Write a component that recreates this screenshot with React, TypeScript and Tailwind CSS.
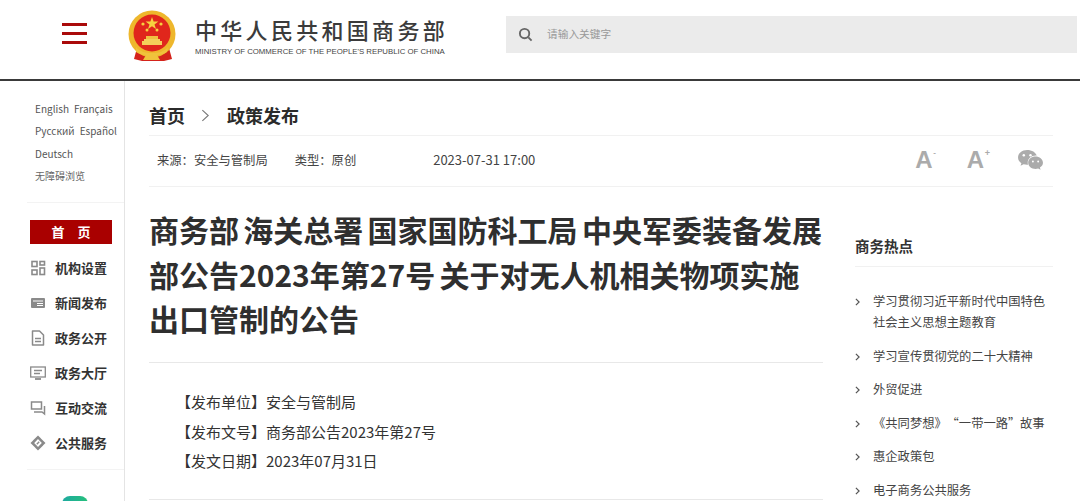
import React from 'react';

const FONT = "font-['Noto_Sans_CJK_SC','Noto_Sans',sans-serif]";

const Emblem: React.FC = () => (
  <svg width="50" height="52" viewBox="0 0 50 52" className="shrink-0">
    <path d="M9 38l-3 11 8 2h22l8-2-3-11z" fill="#d4231b" />
    <circle cx="24" cy="24" r="23.5" fill="#eeb72c" />
    <circle cx="24" cy="23" r="18.5" fill="#e0261c" />
    <polygon points="24,7 25.6,11.6 30.4,11.6 26.5,14.4 28,19 24,16.2 20,19 21.5,14.4 17.6,11.6 22.4,11.6" fill="#f6d13f" />
    <circle cx="15" cy="14" r="1.6" fill="#f6d13f" />
    <circle cx="33" cy="14" r="1.6" fill="#f6d13f" />
    <circle cx="19" cy="20" r="1.5" fill="#f6d13f" />
    <circle cx="29" cy="20" r="1.5" fill="#f6d13f" />
    <path d="M16 29h16v2h2v4H14v-4h2z" fill="#f4cf5a" />
    <path d="M18 26h12v3H18z" fill="#f0c040" />
    <path d="M8 37c4 5 10 6 16 6s12-1 16-6l-1 5c-3 2-6 3-10 3l3 5H15l3-5c-4 0-7-1-10-3z" fill="#f0c23c" />
  </svg>
);

const navIcon = 'w-[16px] h-[16px] shrink-0 text-[#8a8a8a]';
const PINWHEEL = 'M8 0.5L10.8 3.3L9 5.1L8 4.100L4.700 7.400L2.900 5.600z';

const NAV: { label: string; icon: React.ReactNode }[] = [
  {
    label: '机构设置',
    icon: (
      <svg viewBox="0 0 16 16" className={navIcon} fill="none" stroke="currentColor" strokeWidth="1.6">
        <rect x="2" y="1.5" width="5" height="5" />
        <rect x="10" y="1.5" width="4.5" height="3.5" />
        <rect x="2" y="10" width="5" height="4.5" />
        <rect x="10" y="8" width="4.5" height="6.5" />
      </svg>
    ),
  },
  {
    label: '新闻发布',
    icon: (
      <svg viewBox="0 0 16 16" className={navIcon}>
        <rect x="1" y="3" width="14" height="10" rx="1" fill="currentColor" />
        <path d="M3 6h10M7 8.5h6M7 10.5h6" stroke="#fff" strokeWidth="1" />
      </svg>
    ),
  },
  {
    label: '政务公开',
    icon: (
      <svg viewBox="0 0 16 16" className={navIcon} fill="none" stroke="currentColor" strokeWidth="1.5">
        <path d="M2.5 1h7l4 4v10h-11z" strokeLinejoin="round" />
        <path d="M5 8.5h6M5 11.5h6" />
      </svg>
    ),
  },
  {
    label: '政务大厅',
    icon: (
      <svg viewBox="0 0 16 16" className={navIcon} fill="none" stroke="currentColor" strokeWidth="1.3">
        <rect x="0.7" y="2" width="14.6" height="10" />
        <path d="M4 5.5h8M4 8.5h6" />
        <path d="M5 14h6" strokeWidth="1.8" />
      </svg>
    ),
  },
  {
    label: '互动交流',
    icon: (
      <svg viewBox="0 0 16 16" className={navIcon} fill="none" stroke="currentColor" strokeWidth="1.5">
        <path d="M1.5 2h10v7h-10z" />
        <path d="M4 12h8l2.5 2V6" />
      </svg>
    ),
  },
  {
    label: '公共服务',
    icon: (
      <svg viewBox="0 0 16 16" className={navIcon} fill="currentColor">
        <path d={PINWHEEL} />
        <path d={PINWHEEL} transform="rotate(90 8 8)" />
        <path d={PINWHEEL} transform="rotate(180 8 8)" />
        <path d={PINWHEEL} transform="rotate(270 8 8)" />
        <path d="M6.300 8.700L8.700 6.300L9.700 7.300L7.300 9.700z" />
      </svg>
    ),
  },
];

const HOT: string[][] = [
  ['学习贯彻习近平新时代中国特色', '社会主义思想主题教育'],
  ['学习宣传贯彻党的二十大精神'],
  ['外贸促进'],
  ['《共同梦想》 “一带一路” 故事'],
  ['惠企政策包'],
  ['电子商务公共服务'],
];

const App: React.FC = () => {
  return (
    <div className={`${FONT} w-[1080px] h-[501px] overflow-hidden bg-white`}>
      {/* Header */}
      <header className="h-[81px] border-b-2 border-[#3a3a3a] flex">
        <div className="w-[128px] shrink-0 flex items-center pl-[62px] pb-[12px]">
          <div className="w-[25px] flex flex-col gap-[6px]">
            <div className="h-[3px] bg-[#aa0a0a]" />
            <div className="h-[3px] bg-[#aa0a0a]" />
            <div className="h-[3px] bg-[#aa0a0a]" />
          </div>
        </div>
        <div className="w-[378px] shrink-0 flex items-start pt-[10px]">
          <Emblem />
          <div className="ml-[17px] pt-[5px]">
            <div className="text-[22px] leading-[28px] tracking-[3.3px] font-medium text-[#3b3b3b] whitespace-nowrap">中华人民共和国商务部</div>
            <div className="font-['Liberation_Sans',sans-serif] text-[7.8px] leading-[12px] mt-[3px] text-[#444] whitespace-nowrap">MINISTRY OF COMMERCE OF THE PEOPLE'S REPUBLIC OF CHINA</div>
          </div>
        </div>
        <div className="w-[571px] h-[37px] mt-[16px] bg-[#ebebeb] flex items-center pl-[12px]">
          <svg viewBox="0 0 16 16" className="w-[15px] h-[15px] text-[#666]" fill="none" stroke="currentColor" strokeWidth="2">
            <circle cx="7" cy="7" r="5" />
            <path d="M11 11l3.5 3.5" />
          </svg>
          <span className="ml-[14px] text-[10.7px] text-[#999]">请输入关键字</span>
        </div>
      </header>

      <div className="flex h-[420px]">
        {/* Left sidebar */}
        <aside className="w-[125px] shrink-0 border-r border-[#e4e4e4] pl-[27px]">
          <div className="h-[122px] border-b border-[#f3f3f3] pl-[8px] pt-[17px] text-[10px] leading-[22.4px] text-[#555] whitespace-nowrap">
            <div className="flex gap-[5px]"><span>English</span><span>Français</span></div>
            <div className="flex gap-[5px]"><span>Русский</span><span>Español</span></div>
            <div>Deutsch</div>
            <div className="text-[#666]">无障碍浏览</div>
          </div>
          <div className="h-[267px] border-b border-[#f3f3f3] pl-[3px] pt-[17px]">
            <div className="w-[82px] h-[24px] bg-[#a90000] text-white text-[13px] font-bold flex items-center justify-center gap-[13px]">
              <span>首</span><span>页</span>
            </div>
            <ul className="mt-[6px]">
              {NAV.map((n) => (
                <li key={n.label} className="h-[35px] flex items-center">
                  {n.icon}
                  <span className="ml-[9px] text-[13px] font-bold text-[#333] whitespace-nowrap">{n.label}</span>
                </li>
              ))}
            </ul>
          </div>
          <div className="w-[26px] h-[10px] ml-[35px] mt-[26px] rounded-t-[8px] bg-gradient-to-r from-[#1fa9a0] to-[#27c07a]" />
        </aside>

        {/* Main */}
        <main className="w-[928px] shrink-0 pl-[24px]">
          <div className="h-[55px] border-b border-[#f1f1f1] flex items-center pt-[15px] text-[18px] font-bold text-[#2b2b2b]">
            <span>首页</span>
            <svg viewBox="0 0 10 14" className="w-[9px] h-[13px] ml-[16px] mr-[17px]" fill="none" stroke="#777" strokeWidth="1.2">
              <path d="M1.5 1l6.5 6-6.5 6" />
            </svg>
            <span>政策发布</span>
          </div>
          <div className="h-[51px] border-b border-[#f1f1f1] flex items-center pl-[8px] pb-[2px] text-[12.3px] text-[#444] whitespace-nowrap">
            <span>来源：安全与管制局</span>
            <span className="ml-[27px]">类型：原创</span>
            <span className="ml-[77px] text-[13px]">2023-07-31 17:00</span>
            <div className="ml-auto flex items-center text-[#ababab] pr-[9px]">
              <span className="relative text-[24px] leading-none font-bold font-['Liberation_Sans',sans-serif]">A
                <span className="absolute left-[18px] top-[1px] text-[8px]">-</span>
              </span>
              <span className="relative ml-[34px] text-[24px] leading-none font-bold font-['Liberation_Sans',sans-serif]">A
                <span className="absolute left-[18px] top-[1px] text-[9px]">+</span>
              </span>
              <svg viewBox="0 0 28 24" className="w-[27px] h-[23px] ml-[33px]" fill="currentColor">
                <path d="M10.5 1C5 1 1 4.4 1 8.8c0 2.5 1.3 4.5 3.5 6l-.9 2.8 3.2-1.7c1.2.3 2.3.5 3.6.5h1c-.2-.7-.3-1.3-.3-2 0-4.2 3.8-7.5 8.5-7.5h.9C19.5 3.5 15.5 1 10.5 1z" />
                <path d="M27 14.3c0-3.7-3.7-6.5-7.7-6.5-4.3 0-7.7 2.8-7.7 6.5s3.4 6.5 7.7 6.5c.9 0 1.8-.2 2.7-.5l2.5 1.4-.7-2.3c2-1.3 3.2-3.1 3.2-5.1z" />
                <circle cx="7" cy="6.5" r="1.3" fill="#fff" />
                <circle cx="14" cy="6.5" r="1.3" fill="#fff" />
                <circle cx="16.5" cy="13" r="1" fill="#fff" />
                <circle cx="22" cy="13" r="1" fill="#fff" />
              </svg>
            </div>
          </div>

          <div className="flex">
            {/* Article */}
            <article className="w-[674px] shrink-0">
              <h1 className="mt-[20px] h-[156px] border-b border-[#e8e8e8] text-[30px] leading-[44.5px] [word-spacing:-2.5px] font-bold text-[#2f2f2f]">
                商务部 海关总署 国家国防科工局 中央军委装备发展部公告2023年第27号 关于对无人机相关物项实施出口管制的公告
              </h1>
              <div className="h-[137px] border-b border-[#e8e8e8] pt-[24px] pl-[27px] text-[15px] leading-[29.5px] text-[#333]">
                <p>【发布单位】安全与管制局</p>
                <p>【发布文号】商务部公告2023年第27号</p>
                <p>【发文日期】2023年07月31日</p>
              </div>
            </article>

            {/* Right column */}
            <section className="ml-[32px] w-[198px] shrink-0">
              <h2 className="mt-[47px] h-[33px] border-b border-[#f1f1f1] text-[14.5px] leading-[24px] font-bold text-[#333]">商务热点</h2>
              <ul className="mt-[24px] text-[12.3px] leading-[21px] [word-spacing:-3px] text-[#444]">
                {HOT.map((lines) => (
                  <li key={lines[0]} className="flex mb-[12.6px]">
                    <svg viewBox="0 0 6 10" className="w-[5px] h-[8px] mt-[7px] shrink-0" fill="none" stroke="#555" strokeWidth="1.5">
                      <path d="M1 1l4 4-4 4" />
                    </svg>
                    <div className="ml-[13px] whitespace-nowrap">
                      {lines.map((l) => <div key={l}>{l}</div>)}
                    </div>
                  </li>
                ))}
              </ul>
            </section>
          </div>
        </main>
      </div>
    </div>
  );
};

export default App;
